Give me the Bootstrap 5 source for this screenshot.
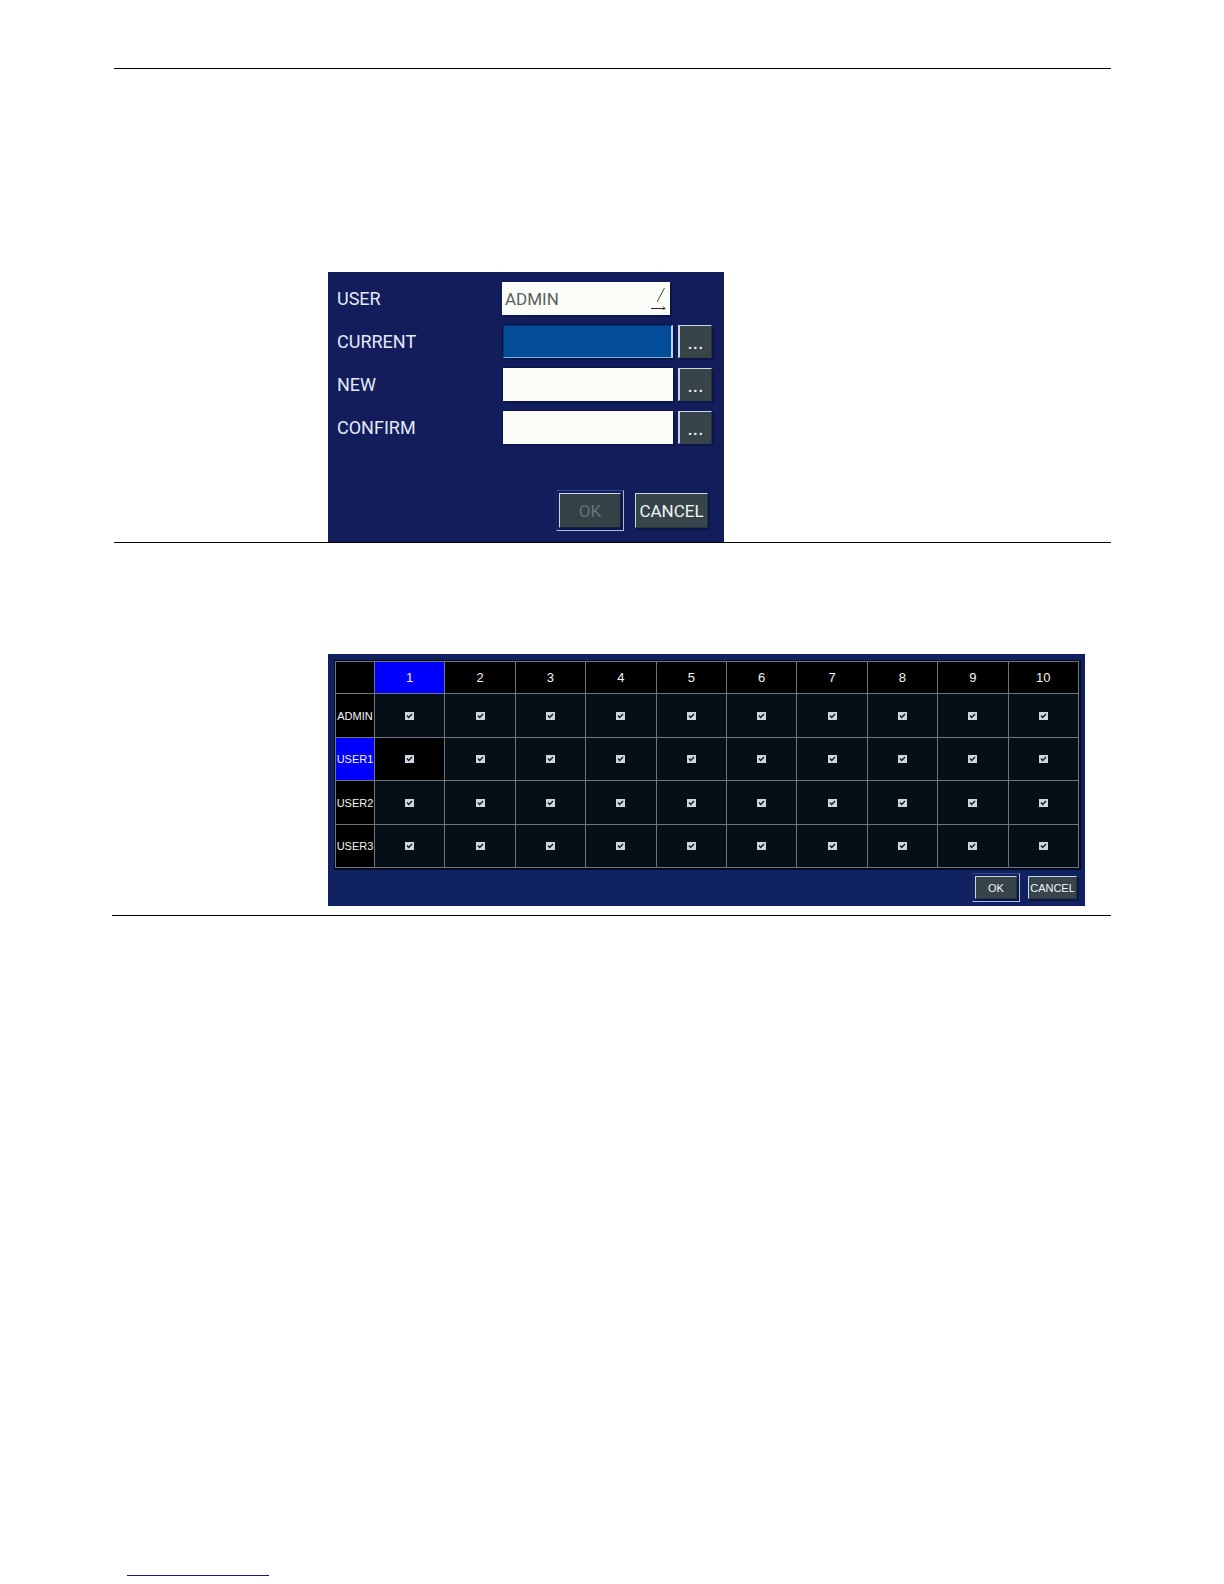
<!DOCTYPE html>
<html lang="en">
<head>
<meta charset="utf-8">
<meta name="viewport" content="width=device-width, initial-scale=1">
<title>User passwords and permissions</title>
<link href="https://cdn.jsdelivr.net/npm/bootstrap@5.3.0/dist/css/bootstrap.min.css" rel="stylesheet">
<style>
  body { font-family: Roboto, "Liberation Sans", sans-serif; background: #fff; }
  .sheet { min-height: 100vh; padding: 68px 113px 8px 114px; }
  .sheet-section { border-bottom: 1px solid #000; padding-left: 214px; }
  .first-section { border-top: 1px solid #000; padding-top: 203px; }
  .second-section { margin-left: -2px; padding: 111px 0 9px 216px; }
  .foot-rule { width: 142px; height: 1px; margin-left: 13px; background: #1a1480; }

  /* password dialog */
  .pw-panel { background: #131d5c; max-width: 396px; padding: 10px 12px 14px 9px; color: #e4eaf6; font-size: 18px; line-height: 24px; }
  .pw-rows { gap: 10px; }
  .pw-line { height: 33px; }
  .pw-line label { width: 166px; }
  .pw-line .form-control { width: 170px; height: 33px; padding: 0 4px; background: #fbfdf8; border: 1px solid #fbfdf8; box-shadow: 2px 2px 0 #0c1548, -1px -1px 0 #0c1548; }
  .pw-line .form-control.active-box { background: #034c97; border-color: #06376f #b9d4ee #7fb0dc #06376f; border-right-width: 2px; }
  .pw-line .form-select { width: 168px; height: 33px; padding: 2px 4px 0 3px; margin-left: -1px; border: 0; color: #5c5e60; font-size: 17px; box-shadow: 2px 2px 0 #0c1548;
    background: #fbfdf8 url("data:image/svg+xml,%3Csvg xmlns='http://www.w3.org/2000/svg' width='16' height='22' viewBox='0 0 16 22' fill='none' stroke='%23444'%3E%3Cpath d='M13.5 0L6 14'/%3E%3Cpath d='M0 20.5H14M12 18.500L14 20.500L12 21.500' stroke='%23222'/%3E%3C/svg%3E") no-repeat right 3px top 6px / 16px 22px; }
  .bevel { position: relative; background: #37444a; border: 1px solid; border-color: #ccd6de #28333a #28333a #ccd6de; border-radius: 0; padding: 0; color: #f2f5f5; box-shadow: 2px 2px 0 #0c1548; }
  .bevel:disabled { background: #344247; border-color: #ccd6de #16202c #16202c #ccd6de; color: #66747a; opacity: 1; }
  .dots { width: 34px; height: 33px; margin-left: 5px; border-left-width: 2px; border-bottom-color: #37444a; font-size: 20px; line-height: 28px; }
  .pw-actions { margin-top: 49px; gap: 14px; padding-right: 4px; font-size: 17px; }
  .pw-actions .bevel { height: 35px; width: 73px; font-size: 17px; line-height: 24px; }
  .pw-actions .default-act { width: 62px; }
  .default-act::after { content: ""; position: absolute; inset: -4px; border: 1px solid; border-color: #3a4790 #a9b8ee #a9b8ee #1d2868; }

  /* permission grid */
  .perm-panel { background: #0f225f; max-width: 757px; border: 1px solid #131b66; padding: 5px 3px 6px 5px; font-family: "Liberation Sans", sans-serif; font-size: 11px; line-height: 14px; color: #f4f4f4; }
  .perm-wrap { border: 1px solid #050a1c; border-width: 1px 2px 2px 1px; }
  .perm { margin: 0; table-layout: fixed; border-collapse: collapse; --bs-table-bg: transparent; }
  .perm > :not(caption) > * > * { border: 1px solid #6f757b; padding: 0; text-align: center; vertical-align: middle; font-weight: 400; color: #f4f4f4; background: #000; box-shadow: none; }
  .perm thead th { height: 32px; font-size: 13px; }
  .perm tbody td { height: 43px; }
  .perm tbody tr:nth-child(odd) td { height: 44px; }
  .perm .head-col { width: 39px; }
  .perm > :not(caption) > * > .picked { background: #00f; }
  .perm > tbody > tr > td:not(.current-cell) { background: #050f17; }
  .perm .form-check-input { display: block; width: 9px; height: 8px; min-height: 0; margin: 0 auto; border: 0; border-radius: 0; background-color: #ccd7df; }
  .perm .form-check-input:checked { background-size: 9px 8px; background-image: url("data:image/svg+xml,%3Csvg xmlns='http://www.w3.org/2000/svg' viewBox='0 0 9 8' fill='none' stroke='%23101820' stroke-width='1.4'%3E%3Cpath d='M2 3.500L3.700 5.500L7 2'/%3E%3C/svg%3E"); }
  .perm-actions { margin-top: 6px; gap: 11px; padding-right: 4px; }
  .perm-actions .bevel { width: 49px; height: 23px; font-size: 11px; line-height: 14px; }
  .perm-actions .default-act { width: 42px; }
</style>
</head>
<body>
<main class="sheet d-flex flex-column">
  <section class="sheet-section first-section">
    <form class="pw-panel">
      <div class="pw-rows d-flex flex-column">
        <div class="pw-line d-flex align-items-center">
          <label for="user">USER</label>
          <select id="user" class="form-select rounded-0"><option>ADMIN</option></select>
        </div>
        <div class="pw-line d-flex align-items-center">
          <label for="current">CURRENT</label>
          <input id="current" type="password" class="form-control rounded-0 active-box">
          <button type="button" class="btn bevel dots">...</button>
        </div>
        <div class="pw-line d-flex align-items-center">
          <label for="new">NEW</label>
          <input id="new" type="password" class="form-control rounded-0">
          <button type="button" class="btn bevel dots">...</button>
        </div>
        <div class="pw-line d-flex align-items-center">
          <label for="confirm">CONFIRM</label>
          <input id="confirm" type="password" class="form-control rounded-0">
          <button type="button" class="btn bevel dots">...</button>
        </div>
      </div>
      <div class="pw-actions d-flex justify-content-end">
        <button type="button" class="btn bevel default-act" disabled>OK</button>
        <button type="button" class="btn bevel">CANCEL</button>
      </div>
    </form>
  </section>

  <section class="sheet-section second-section">
    <form class="perm-panel">
      <div class="perm-wrap">
        <table class="table perm">
          <thead><tr id="channels"><th class="head-col"></th></tr></thead>
          <tbody id="users"></tbody>
        </table>
      </div>
      <div class="perm-actions d-flex justify-content-end">
        <button type="button" class="btn bevel default-act">OK</button>
        <button type="button" class="btn bevel">CANCEL</button>
      </div>
    </form>
  </section>
  <div class="foot-rule mt-auto"></div>
</main>
<script>
  const channels = document.getElementById('channels');
  for (let c = 1; c <= 10; c++) {
    channels.insertAdjacentHTML('beforeend', `<th scope="col" class="${c === 1 ? 'picked' : ''}">${c}</th>`);
  }
  const users = document.getElementById('users');
  ['ADMIN', 'USER1', 'USER2', 'USER3'].forEach(name => {
    let cells = `<th scope="row" class="${name === 'USER1' ? 'picked' : ''}">${name}</th>`;
    for (let c = 1; c <= 10; c++) {
      const current = name === 'USER1' && c === 1;
      cells += `<td class="${current ? 'current-cell' : ''}"><input type="checkbox" class="form-check-input" aria-label="${name} ${c}" checked></td>`;
    }
    users.insertAdjacentHTML('beforeend', `<tr>${cells}</tr>`);
  });
</script>
<script src="https://cdn.jsdelivr.net/npm/bootstrap@5.3.0/dist/js/bootstrap.bundle.min.js"></script>
</body>
</html>
